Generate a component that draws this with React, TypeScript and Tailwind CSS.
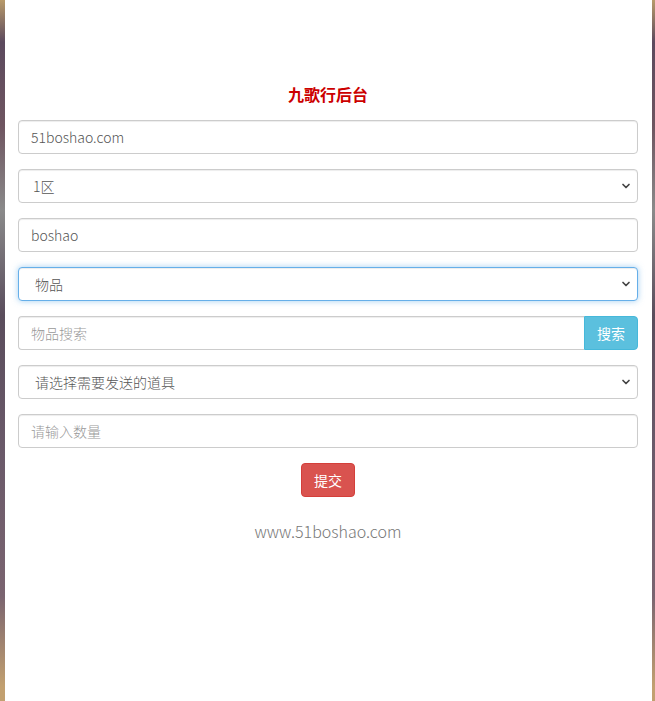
import { useState } from "react";

const font = { fontFamily: '"Noto Sans CJK SC", "Noto Sans", sans-serif' };

function Chevron() {
  return (
    <svg
      className="pointer-events-none absolute right-[7px] top-1/2 -translate-y-1/2"
      width="10"
      height="7"
      viewBox="0 0 10 7"
      fill="none"
    >
      <path d="M2 2 L5 5 L8 2" stroke="#444" strokeWidth="1.7" strokeLinecap="round" strokeLinejoin="round" />
    </svg>
  );
}

export default function App() {
  const [zone, setZone] = useState("1区");
  const [kind, setKind] = useState("物品");
  const [item, setItem] = useState("");

  return (
    <div
      className="min-h-[701px] w-full px-[5px] pr-[3px] bg-[linear-gradient(180deg,#b89a6a_0%,#5c4a5e_6%,#6e5560_18%,#8a8a8a_30%,#5a4d5c_45%,#6b5a6a_65%,#7a6470_85%,#c2a070_98%)]"
      style={font}
    >
      <div className="min-h-[701px] bg-white px-[13px] pr-[14px] pt-[83px] text-[14px] font-light text-[#555]">
        <h4 className="mb-[15px] h-[22px] text-center text-[16px] font-bold leading-[22px] text-[#cc0000]">九歌行后台</h4>

        <div className="flex flex-col gap-[15px]">
          <input
            defaultValue="51boshao.com"
            className="h-[34px] w-full rounded-[4px] border border-[#ccc] px-[12px] shadow-[inset_0_1px_1px_rgba(0,0,0,0.075)] outline-none"
          />

          <div className="relative">
            <select
              value={zone}
              onChange={e => setZone(e.target.value)}
              className="h-[34px] w-full appearance-none rounded-[4px] border border-[#ccc] bg-white px-[14px] shadow-[inset_0_1px_1px_rgba(0,0,0,0.075)] outline-none"
            >
              <option>1区</option>
              <option>2区</option>
            </select>
            <Chevron />
          </div>

          <input
            defaultValue="boshao"
            className="h-[34px] w-full rounded-[4px] border border-[#ccc] px-[12px] shadow-[inset_0_1px_1px_rgba(0,0,0,0.075)] outline-none"
          />

          <div className="relative">
            <select
              value={kind}
              onChange={e => setKind(e.target.value)}
              className="h-[34px] w-full appearance-none rounded-[4px] border border-[#66afe9] bg-white px-[16px] shadow-[inset_0_1px_1px_rgba(0,0,0,0.075),0_0_6px_rgba(102,175,233,0.6)] outline-none"
            >
              <option>物品</option>
              <option>元宝</option>
            </select>
            <Chevron />
          </div>

          <div className="flex">
            <input
              placeholder="物品搜索"
              className="h-[34px] min-w-0 flex-1 rounded-l-[4px] border border-r-0 border-[#ccc] px-[12px] shadow-[inset_0_1px_1px_rgba(0,0,0,0.075)] outline-none placeholder:text-[#999]"
            />
            <button className="h-[34px] w-[54px] rounded-r-[4px] border border-[#46b8da] bg-[#5bc0de] text-[14px] font-normal text-white">
              搜索
            </button>
          </div>

          <div className="relative">
            <select
              value={item}
              onChange={e => setItem(e.target.value)}
              className="h-[34px] w-full appearance-none rounded-[4px] border border-[#ccc] bg-white px-[16px] shadow-[inset_0_1px_1px_rgba(0,0,0,0.075)] outline-none"
            >
              <option value="">请选择需要发送的道具</option>
            </select>
            <Chevron />
          </div>

          <input
            placeholder="请输入数量"
            className="h-[34px] w-full rounded-[4px] border border-[#ccc] px-[12px] shadow-[inset_0_1px_1px_rgba(0,0,0,0.075)] outline-none placeholder:text-[#999]"
          />
        </div>

        <div className="mt-[15px] flex justify-center">
          <button className="h-[34px] w-[54px] rounded-[4px] border border-[#d43f3a] bg-[#d9534f] text-[14px] font-normal text-white">
            提交
          </button>
        </div>

        <p className="mt-[23px] text-center text-[16px] leading-[22px] text-[#777]">www.51boshao.com</p>
      </div>
    </div>
  );
}
